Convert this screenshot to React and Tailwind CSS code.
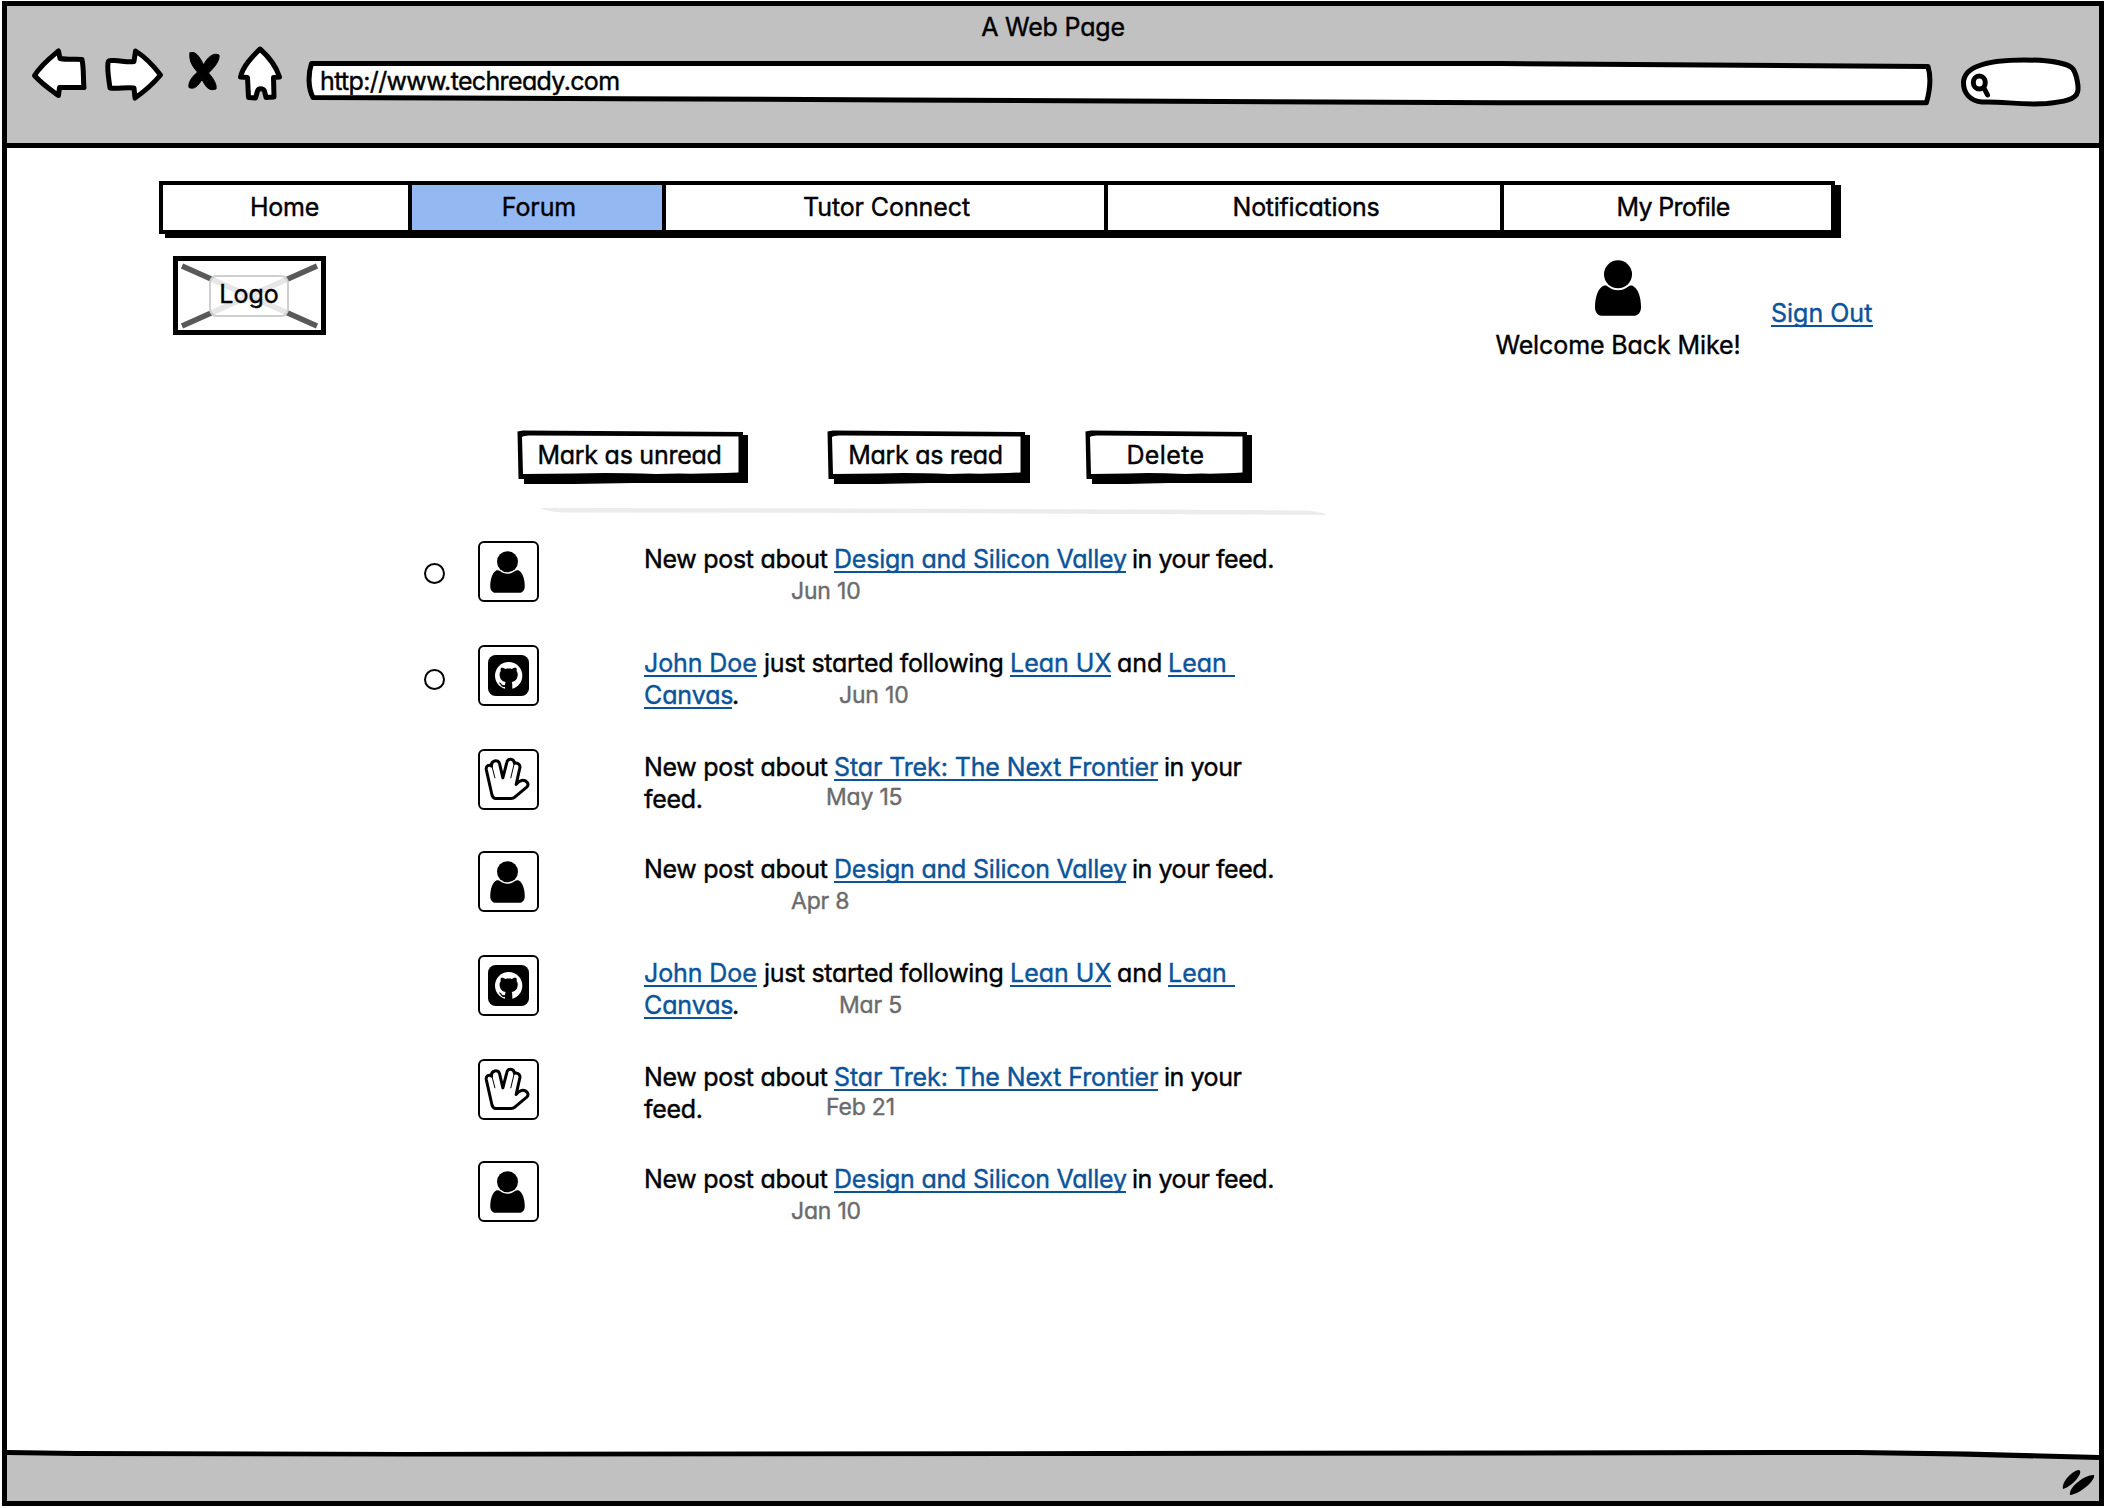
import React from "react";

const INK = "#000";

function PageIcon({ box, className, children, fill = "#fff" }) {
  return (
    <svg
      viewBox={box}
      className={className}
      fill={fill}
      stroke={INK}
      strokeWidth="5"
      strokeLinejoin="round"
      strokeLinecap="round"
    >
      {children}
    </svg>
  );
}

function Toolbar() {
  return (
    <div className="ml-[23px] mt-[3px] flex h-[62px]">
      <PageIcon box="30 46 58 62" className="h-[62px] w-[58px] shrink-0">
        <path d="M34.5 75.5 C42 64 50 58 58.5 51 L60 58.500 C68 60 75 59 82 59.500 C84 69 83 79 84 87.500 L59.500 87.500 L58.500 95.500 C51 90 43 85 34.500 75.500 Z" />
      </PageIcon>
      <PageIcon box="103 46 62 62" className="ml-[15px] h-[62px] w-[62px] shrink-0">
        <path d="M108 63 C108 60 110 60.500 113 60.500 C120 60 127 63 134 61.500 L135.500 51 C145 57 153 65 160.500 75 C153 84 145 91 135 98 L134 88 C126 87 118 89 110 88 C109 80 107 71 108 63 Z" />
      </PageIcon>
      <PageIcon box="186 46 35 62" className="ml-[21px] h-[62px] w-[35px] shrink-0" fill={INK}>
        <path
          strokeWidth="1"
          d="M190 53 C195 50 200 57 203.500 65 C207 58 213 52 219 55 C220 60 215 67 208.500 73 C214 79 217 85 216 89 C208 92 205 85 202 79.500 C198 86 194 90 189 87.500 C188 82 192 77 197.500 72 C191 65 189 59 190 53 Z"
        />
      </PageIcon>
      <PageIcon box="236 46 48 62" className="ml-[15px] h-[62px] w-[48px] shrink-0">
        <path d="M260 49 C268 56 276 66 279.500 77 L273.500 77.500 L274 97 L266 97.500 L264.500 91 C263 88 258.500 88 257.500 91 L255.500 98 L248.500 97.500 L247.500 77.500 L240.500 77 C243 66 252 57 260 49 Z" />
      </PageIcon>
      <div className="relative ml-[21px] h-[62px] w-[1629px] shrink-0">
        <PageIcon box="305 46 1629 62" className="absolute inset-0 h-full w-full">
          <path d="M311.500 63.500 L1500 63.500 L1928 66.500 C1931.500 78 1930 90 1926.500 102.700 L1500 102.700 L900 100 L620 98.700 L313 97.500 C308 88 308 74 311.500 63.500 Z" />
        </PageIcon>
        <p className="relative ml-[15px] mt-[19px] text-[25px] leading-8 tracking-[-0.65px]">
          http://www.techready.com
        </p>
      </div>
      <PageIcon box="1958 46 125 62" className="ml-[24px] h-[62px] w-[125px] shrink-0">
        <path d="M1963.500 83 C1963.500 70 1978 60 2024 60 C2052 60 2069 64 2073 69 C2077 75 2079 88 2077.500 92 C2076 100 2062 102 2047 103.500 C2020 105.500 2003 101 1982 102 C1970 101 1963.500 93 1963.500 83 Z" />
        <ellipse cx="1979.300" cy="82.500" rx="6" ry="6.500" />
        <path d="M1984 88 L1987.500 95" />
      </PageIcon>
    </div>
  );
}

const TABS = [
  { label: "Home", cls: "w-[249px] border-r-4 pr-[2px] tracking-[-0.2px]" },
  { label: "Forum", cls: "w-[254px] border-r-4 bg-[#94b9f2] pl-1 tracking-[-0.1px]" },
  { label: "Tutor Connect", cls: "w-[442px] border-r-4 pl-[3px] tracking-[-0.1px]" },
  { label: "Notifications", cls: "w-[396px] border-r-4 pl-1 tracking-[-0.25px]" },
  { label: "My Profile", cls: "flex-1 pl-[11px] tracking-[-0.65px]" },
];

function Nav() {
  return (
    <nav className="ml-[152px] mt-8 flex h-[53px] w-[1676px] border-4 border-black shadow-[6px_4px_0_#000]">
      {TABS.map((t) => (
        <a
          key={t.label}
          className={`flex justify-center border-black pt-[6px] text-[25px] leading-8 ${t.cls}`}
        >
          {t.label}
        </a>
      ))}
    </nav>
  );
}

function UserIcon({ className }) {
  return (
    <svg viewBox="0 0 46 56" className={className} fill={INK}>
      <circle cx="23" cy="14.300" r="14" />
      <path d="M8.500 25.800 C10.500 25.200 12 25.800 13 26.800 C19 31.500 27 31.500 33 26.800 C34.500 25.500 36.500 25.300 38 26 C43.500 29 46 38 46 47 C46 52.500 43 55.800 38.500 55.800 L7.500 55.800 C3 55.800 0 52.500 0 47 C0 38 3 28 8.500 25.800 Z" />
    </svg>
  );
}

function GithubIcon() {
  return (
    <svg viewBox="0 0 123 123" className="ml-[-1px] h-[41px] w-[41px]">
      <rect width="123" height="123" rx="23" fill={INK} />
      <circle cx="62" cy="62" r="41" fill="#fff" />
      <path
        fill={INK}
        d="M39 39 C43 37 49 40 52 42 C58 40 66 40 72 42 C76 39 81 37 85 39 C87 43 86 46 86 49 C90 54 90 60 88 66 C86 76 79 79 71 81 C73 84 73 88 73 104 L51 104 L51 96 C40 98 39 89 34 85 C30 82 35 81 39 85 C42 90 45 92 51 90 C51 86 52 83 53 81 C45 79 38 76 36 66 C34 60 34 54 38 49 C38 46 37 43 39 39 Z"
      />
    </svg>
  );
}

function HandIcon() {
  return (
    <svg
      viewBox="0 0 184 184"
      className="h-[61px] w-[61px] shrink-0"
      fill="none"
      stroke={INK}
      strokeWidth="9"
      strokeLinejoin="round"
      strokeLinecap="round"
    >
      <path d="M25 62 C23 50 34 46 41 52 C38 34 61 30 65 44 L75 87 L87 40 C90 27 108 27 110 43 C120 40 129 48 126 58 L115 107 C121 98 128 96 135 94 C147 94 156 107 147 115 L110 146 C107 149 104 149 100 149 L53 149 C46 149 44 145 42 138 Z" />
      <path strokeWidth="3" d="M42 52 L51 87 M109 45 L99 87" />
    </svg>
  );
}

function Logo() {
  return (
    <div className="relative ml-[166px] flex h-[79px] w-[153px] items-center justify-center border-[5px] border-black">
      <svg
        viewBox="0 0 143 69"
        className="absolute inset-0 h-full w-full"
        stroke="#58595b"
        strokeWidth="5.500"
      >
        <path d="M4 5 L139 65 M139 5 L4 65" />
      </svg>
      <span className="relative mr-px mt-px flex h-[42px] w-[80px] justify-center rounded-lg border-2 border-[#cfcfcf] bg-white/85 pt-px text-[25px] leading-8">
        Logo
      </span>
    </div>
  );
}

function Button({ w, cls, children }) {
  return (
    <button className={`relative h-[54px] ${cls}`}>
      <svg viewBox={`0 0 ${w} 54`} className="absolute inset-0 h-full w-full">
        <path
          fill={INK}
          d={`M0.500 1.500 L6 0.500 L${w - 5} 2 L${w - 5} 5 L${w} 5 L${w} 53 L${w * 0.5} 53 L${w * 0.25} 54 L7 54 L7 49 L1.500 49 Z`}
        />
        <path
          fill="#fff"
          d={`M5 7 Q7 5 15 5.500 L${w - 9.500} 6.500 L${w - 9.500} 42.500 Q${w * 0.8} 44 ${w * 0.7} 43.500 L${w * 0.6} 44 Q${w * 0.4} 42.500 ${w * 0.25} 43.500 L6 44 Z`}
        />
      </svg>
      <span className="relative block pb-1 pr-[6px] text-[25px] leading-8">{children}</span>
    </button>
  );
}

function Link({ cls, children }) {
  return (
    <a className={`block h-[30px] shrink-0 whitespace-pre border-b-2 border-[#0b5499] text-[#0b5499] ${cls}`}>
      {children}
    </a>
  );
}

function DateLabel({ children }) {
  return (
    <time className="text-[23px] leading-8 tracking-[-0.2px] text-[#6b6b6b]">
      {children}
    </time>
  );
}

function Design({ date }) {
  return (
    <>
      <div className="flex">
        <span className="w-[190px] tracking-[-0.3px]">New post about</span>
        <Link cls="w-[292px] tracking-[-0.22px]">Design and Silicon Valley</Link>
        <span className="ml-[6px] tracking-[-0.45px]">in your feed.</span>
      </div>
      <div className="flex">
        <span className="w-[147px]" />
        <DateLabel>{date}</DateLabel>
      </div>
    </>
  );
}

function Follow({ date }) {
  return (
    <>
      <div className="flex">
        <Link cls="w-[113px] tracking-[-0.1px]">John Doe</Link>
        <span className="w-[253px] pl-[7px] tracking-[-0.35px]">just started following</span>
        <Link cls="w-[101px]">Lean UX</Link>
        <span className="w-[57px] pl-[6px]">and</span>
        <Link cls="w-[67px]">{"Lean "}</Link>
      </div>
      <div className="flex">
        <Link cls="w-[88px] tracking-[-0.1px]">Canvas</Link>
        <span className="w-[107px]">.</span>
        <DateLabel>{date}</DateLabel>
      </div>
    </>
  );
}

function Trek({ date }) {
  return (
    <>
      <div className="flex">
        <span className="w-[190px] tracking-[-0.3px]">New post about</span>
        <Link cls="w-[324px] tracking-[-0.12px]">Star Trek: The Next Frontier</Link>
        <span className="ml-[6px] tracking-[-0.45px]">in your</span>
      </div>
      <div className="flex">
        <span className="w-[182px] tracking-[-0.3px]">feed.</span>
        <span className="-mt-[3px]">
          <DateLabel>{date}</DateLabel>
        </span>
      </div>
    </>
  );
}

const KINDS = {
  design: { Body: Design, h: "h-[104px]", icon: <UserIcon className="ml-[-2px] h-[42px] w-[35px]" /> },
  follow: { Body: Follow, h: "h-[104px]", icon: <GithubIcon /> },
  trek: { Body: Trek, h: "h-[102px]", icon: <HandIcon /> },
};

const FEED = [
  { kind: "design", date: "Jun 10", radio: "mt-[22px]" },
  { kind: "follow", date: "Jun 10", radio: "mt-6" },
  { kind: "trek", date: "May 15" },
  { kind: "design", date: "Apr 8" },
  { kind: "follow", date: "Mar 5" },
  { kind: "trek", date: "Feb 21" },
  { kind: "design", date: "Jan 10" },
];

function FeedRow({ kind, date, radio }) {
  const { Body, h, icon } = KINDS[kind];
  return (
    <li className={`flex items-start ${h}`}>
      <span
        className={
          radio
            ? `h-[21px] w-[21px] rounded-full border-[2.500px] border-black ${radio}`
            : "h-[21px] w-[21px]"
        }
      />
      <span className="ml-[33px] flex h-[61px] w-[61px] items-center justify-center rounded-[6px] border-2 border-black">
        {icon}
      </span>
      <div className="ml-[105px] mt-[2px] whitespace-nowrap text-[25px] leading-8">
        <Body date={date} />
      </div>
    </li>
  );
}

export default function App() {
  return (
    <div className="h-[1508px] w-[2106px] overflow-hidden bg-white pl-[2px] pt-px font-['Inter',sans-serif] text-black [-webkit-text-stroke:0.4px_currentColor] [font-feature-settings:'cv11']">
      <div className="flex h-[1505px] w-[2102px] flex-col border-[5px] border-black bg-white">
        <header className="h-[142px] shrink-0 border-b-[5px] border-black bg-[#c1c1c1]">
          <h1 className="pt-[5px] text-center text-[25px] leading-8 tracking-[-0.2px]">A Web Page</h1>
          <Toolbar />
        </header>

        <main className="flex-1 pt-px">
          <Nav />
          <section className="mt-[22px] flex h-[104px] items-start">
            <Logo />
            <div className="ml-[1169px] mt-1 flex w-[246px] flex-col items-center">
              <UserIcon className="h-[56px] w-[46px]" />
              <p className="mt-[13px] whitespace-nowrap text-[25px] leading-8 tracking-[-0.1px]">
                Welcome Back Mike!
              </p>
            </div>
            <div className="ml-[30px] mt-[41px] text-[25px] leading-8">
              <Link cls="w-[102px]">Sign Out</Link>
            </div>
          </section>

          <div className="ml-[510px] mt-[70px] flex">
            <Button w={231} cls="w-[231px] tracking-[-0.25px]">Mark as unread</Button>
            <Button w={203} cls="ml-[79px] w-[203px] tracking-[-0.3px]">Mark as read</Button>
            <Button w={167} cls="ml-[55px] w-[167px] tracking-[0.4px]">Delete</Button>
          </div>

          <svg viewBox="0 0 786 8" className="ml-[534px] mt-6 h-2 w-[786px]" fill="#ececec">
            <path d="M0 0 L300 0.500 L600 1.500 L765 2.500 Q782 4 786 7 L700 6.500 L400 5 L20 4.500 Q4 3 0 0 Z" />
          </svg>

          <ul className="ml-[417px] mt-[25px]">
            {FEED.map((item, i) => (
              <FeedRow key={i} {...item} />
            ))}
          </ul>
        </main>

        <footer className="relative flex h-[52px] shrink-0 justify-end bg-[#c1c1c1]">
          <svg viewBox="0 0 2092 12" className="absolute inset-x-0 top-0 h-3 w-full">
            <path fill="#fff" d="M0 0 L2092 0 L2092 9 L1890 4 L0 4 Z" />
            <path
              fill={INK}
              d="M0 1 L70 2 L400 3 L1100 2 L1850 1 L1960 2.500 L2092 6 L2092 11 L1950 7.500 L1850 6 L1100 7 L400 7.500 L70 7 L0 6 Z"
            />
          </svg>
          <svg viewBox="2060 1467 36 30" className="mr-[3px] mt-[18px] h-[30px] w-[36px]" fill={INK}>
            <path d="M2063 1489 C2061 1482 2073 1470 2079 1470 C2084 1472 2073 1486 2063 1489 Z" />
            <path d="M2070 1495 C2068 1487 2086 1474 2094 1475 C2096 1480 2080 1494 2070 1495 Z" />
          </svg>
        </footer>
      </div>
    </div>
  );
}
